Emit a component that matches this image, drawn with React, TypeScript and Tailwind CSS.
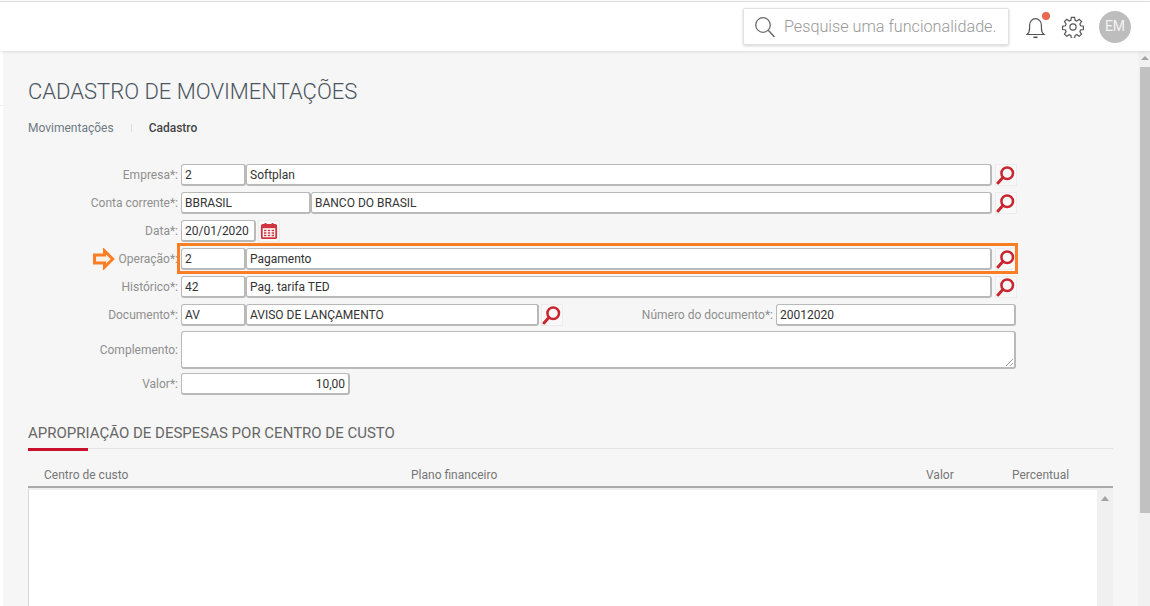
import React from "react";

const font = { fontFamily: "Roboto, 'Liberation Sans', sans-serif" };

function Lens({ size = 20 }: { size?: number }) {
  return (
    <svg width={size} height={size} viewBox="0 0 20 20" fill="none">
      <circle cx="11.200" cy="8.200" r="5.800" stroke="#c9252f" strokeWidth="2.500" />
      <path d="M6.900 12.600 2 18" stroke="#c9252f" strokeWidth="3" strokeLinecap="round" />
    </svg>
  );
}

function LensButton() {
  return (
    <div className="flex h-[22px] w-[22px] shrink-0 items-center justify-center border border-[#ececec] bg-[#f8f8f8]">
      <Lens />
    </div>
  );
}

function Field({ value, className = "", right = false }: { value: string; className?: string; right?: boolean }) {
  return (
    <div
      className={`flex h-[22px] items-center rounded-[3px] border border-[#b9b9b9] border-b-2 border-r-2 bg-white px-[3px] text-[12px] text-[#333] ${right ? "justify-end" : ""} ${className}`}
    >
      {value}
    </div>
  );
}

function Label({ children }: { children: React.ReactNode }) {
  return <div className="w-[179px] shrink-0 pr-[1px] text-right text-[12px] text-[#8f8f8f]">{children}</div>;
}

function LookupRow({ label, code, name, highlight = false }: { label: string; code: string; name: string; highlight?: boolean }) {
  return (
    <div className="relative flex h-[22px] items-center">
      {highlight && (
        <>
          <div className="absolute left-[177px] top-[-5px] h-[31px] w-[841px] border-[3px] border-[#fb7e24]" />
          <svg className="absolute left-[93px] top-0" width="22" height="22" viewBox="0 0 22 22" fill="none">
            <path d="M1.500 7h10V2.800L19.700 11l-8.200 8.200V15h-10z" stroke="#fb7e24" strokeWidth="3" fill="#f9efe6" />
          </svg>
        </>
      )}
      <Label>{label}</Label>
      <Field value={code} className="ml-[2px] w-[65px]" />
      <Field value={name} className="w-[746px]" />
      <div className="ml-[3px]"><LensButton /></div>
    </div>
  );
}

export default function App() {
  return (
    <div className="flex h-[606px] w-[1150px] flex-col overflow-hidden bg-[#f6f6f6]" style={font}>
      <div className="h-px shrink-0 bg-white" />
      <header className="z-10 flex h-[50px] shrink-0 items-center justify-end border-t border-[#dcdcdc] bg-white pr-[19px] shadow-[0_1px_3px_rgba(0,0,0,0.1)]">
        <div className="flex h-[37px] w-[266px] items-center rounded-[2px] border border-[#e2e2e2] bg-white pl-[10px] shadow-[0_1px_3px_rgba(0,0,0,0.18)]">
          <svg width="22" height="24" viewBox="0 0 22 24" fill="none" stroke="#6b6b6b" strokeWidth="1.300">
            <circle cx="9" cy="10" r="7.300" />
            <path d="M14.300 15.300 20.500 22" strokeWidth="1.500" />
          </svg>
          <span className="ml-[8px] whitespace-nowrap pt-[2px] text-[16.200px] font-light text-[#999999]">Pesquise uma funcionalidade.</span>
        </div>
        <div className="relative ml-[17px] h-[24px] w-[20px]">
          <svg width="20" height="24" viewBox="0 0 20 24" fill="none" stroke="#555" strokeWidth="1.200">
            <path d="M1 19.500h17c-2-1.500-2.600-3-2.600-6.500V10c0-3.500-2.500-6.300-5.900-6.300S3.600 6.500 3.600 10v3c0 3.500-.6 5-2.600 6.500z" />
            <path d="M7.500 22.300h4" strokeWidth="1.600" />
          </svg>
          <div className="absolute left-[16px] top-[-3px] h-[8px] w-[8px] rounded-full bg-[#e8694f]" />
        </div>
        <svg className="ml-[16px]" width="22" height="22" viewBox="0 0 24 24" fill="none" stroke="#555" strokeWidth="1.300">
          <circle cx="12" cy="12" r="3.400" />
          <path d="M10.200 1.500h3.600l.5 3.100 1.900.8 2.600-1.800 2.500 2.500-1.800 2.600.8 1.900 3.100.5v3.600l-3.100.5-.8 1.900 1.800 2.600-2.500 2.500-2.600-1.800-1.900.8-.5 3.100h-3.600l-.5-3.100-1.900-.8-2.600 1.800-2.500-2.500 1.800-2.600-.8-1.900-3.100-.5v-3.600l3.100-.5.8-1.900-1.800-2.600 2.500-2.500 2.600 1.800 1.900-.8z" />
        </svg>
        <div className="ml-[15px] flex h-[32px] w-[32px] items-center justify-center rounded-full bg-[#bdbdbd] text-[14px] text-[#f3f3f3]">EM</div>
      </header>

      <div className="flex min-h-0 flex-1">
        <div className="w-[3px] shrink-0 bg-white">
          <div className="mt-[54px] h-px bg-[#eeeeee]" />
        </div>
        <main className="min-w-0 flex-1 pl-[25px]">
          <h1 className="mt-[26px] text-[22px] font-light leading-[30px] text-[#4a5560]">CADASTRO DE MOVIMENTAÇÕES</h1>
          <nav className="mt-[14px] flex items-center text-[12px] leading-[14px]">
            <span className="text-[#6f7a84]">Movimentações</span>
            <span className="ml-[17px] h-[8px] w-px bg-[#dedede]" />
            <span className="ml-[17px] font-medium text-[#444]">Cadastro</span>
          </nav>

          <form className="-ml-[28px] mt-[29px] flex flex-col gap-[6px]">
            <LookupRow label="Empresa*:" code="2" name="Softplan" />
            <div className="flex h-[22px] items-center">
              <Label>Conta corrente*:</Label>
              <Field value="BBRASIL" className="ml-[2px] w-[130px]" />
              <Field value="BANCO DO BRASIL" className="w-[681px]" />
              <div className="ml-[3px]"><LensButton /></div>
            </div>
            <div className="flex h-[22px] items-center">
              <Label>Data*:</Label>
              <Field value="20/01/2020" className="ml-[2px] w-[75px]" />
              <div className="ml-[2px] flex h-[22px] w-[22px] items-center justify-center border border-[#ececec] bg-[#f8f8f8]">
                <svg width="18" height="18" viewBox="0 0 18 18" fill="none">
                  <rect x="1.800" y="2.800" width="14.400" height="13.400" rx="1" fill="#fff" stroke="#d0343f" strokeWidth="1.800" />
                  <rect x="1.800" y="2.800" width="14.400" height="3.400" fill="#d0343f" />
                  <path d="M5.500 1v3M12.500 1v3" stroke="#d0343f" strokeWidth="1.800" />
                  <path d="M4 8.500h10M4 11h10M4 13.500h10" stroke="#d0343f" strokeWidth="1.600" strokeDasharray="2.400 1.400" />
                </svg>
              </div>
            </div>
            <LookupRow label="Operação*:" code="2" name="Pagamento" highlight />
            <LookupRow label="Histórico*:" code="42" name="Pag. tarifa TED" />
            <div className="flex h-[22px] items-center">
              <Label>Documento*:</Label>
              <Field value="AV" className="ml-[2px] w-[65px]" />
              <Field value="AVISO DE LANÇAMENTO" className="w-[293px]" />
              <div className="ml-[2px]"><LensButton /></div>
              <div className="ml-[77px] w-[134px] shrink-0 whitespace-nowrap pr-px text-right text-[12px] text-[#8f8f8f]">Número do documento*:</div>
              <Field value="20012020" className="ml-[2px] w-[240px]" />
            </div>
            <div className="-mt-px flex h-[38px] items-center">
              <Label>Complemento:</Label>
              <div className="relative ml-[2px] h-[38px] w-[835px] rounded-[3px] border border-[#b9b9b9] border-b-2 border-r-2 bg-white">
                <svg className="absolute bottom-0 right-0" width="9" height="9" viewBox="0 0 9 9" stroke="#8a8a8a" strokeWidth="0.800">
                  <path d="M1 8 8 1M5 8l3-3" />
                </svg>
              </div>
            </div>
            <div className="-mt-[2px] flex h-[22px] items-center">
              <Label>Valor*:</Label>
              <Field value="10,00" right className="ml-[2px] w-[169px]" />
            </div>
          </form>

          <section className="mt-[26px] w-[1085px]">
            <h2 className="h-[27px] pt-px text-[15px] leading-[22px] text-[#666]">APROPRIAÇÃO DE DESPESAS POR CENTRO DE CUSTO</h2>
            <div className="relative h-px bg-[#e4e4e4]">
              <div className="absolute left-0 top-0 h-[3px] w-[60px] bg-[#c8102e]" />
            </div>
            <div className="flex h-[39px] items-end border-b-2 border-[#aaaaaa] pb-[2px] text-[12px] text-[#777]">
              <span className="ml-[16px] w-[367px]">Centro de custo</span>
              <span className="w-[515px]">Plano financeiro</span>
              <span className="w-[86px]">Valor</span>
              <span>Percentual</span>
            </div>
            <div className="flex h-[130px] border-l border-t-2 border-[#efefef] border-l-[#d8d8d8] bg-white">
              <div className="flex-1" />
              <div className="flex w-[16px] justify-center bg-[#f0f0f0] pt-[6px]">
                <div className="h-0 w-0 border-x-[4px] border-b-[5px] border-x-transparent border-b-[#a3a3a3]" />
              </div>
            </div>
          </section>
        </main>
        <div className="flex w-[12px] shrink-0 flex-col items-end bg-[#f1f1f1] pt-[5px]">
          <div className="mr-[1px] h-0 w-0 border-x-[4px] border-b-[4px] border-x-transparent border-b-[#a3a3a3]" />
          <div className="mt-[7px] h-[446px] w-[10px] bg-[#c1c1c1]" />
        </div>
      </div>
    </div>
  );
}
